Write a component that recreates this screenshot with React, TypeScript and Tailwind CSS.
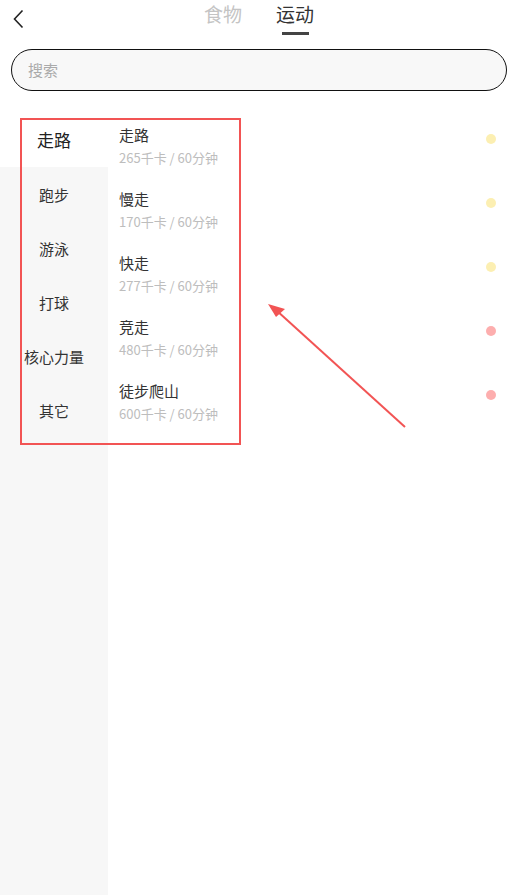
import React from "react";

const cats = ["走路", "跑步", "游泳", "打球", "核心力量", "其它"];
const items = [
  { name: "走路", kcal: 265, c: "bg-[#fcefb2]" },
  { name: "慢走", kcal: 170, c: "bg-[#fcefb2]" },
  { name: "快走", kcal: 277, c: "bg-[#fcefb2]" },
  { name: "竞走", kcal: 480, c: "bg-[#fdaeae]" },
  { name: "徒步爬山", kcal: 600, c: "bg-[#fdaeae]" },
];

export default function App() {
  return (
    <div
      className="relative w-[518px] h-[895px] bg-white overflow-hidden flex flex-col"
      style={{ fontFamily: '"Noto Sans CJK SC", "Noto Sans", sans-serif' }}
    >
      {/* header */}
      <div className="relative h-[49px] shrink-0 flex items-start justify-center">
        <svg className="absolute left-[12px] top-[9px]" width="14" height="20" viewBox="0 0 14 20">
          <path d="M10.5 1.5 L2.5 10 L10.5 18.5" fill="none" stroke="#222" strokeWidth="1.6" />
        </svg>
        <div className="flex gap-[34px] pt-[1px]">
          <div className="flex flex-col items-center">
            <span className="text-[19px] leading-[26px] text-[#c4c4c4]">食物</span>
          </div>
          <div className="flex flex-col items-center">
            <span className="text-[19px] leading-[26px] text-[#333]">运动</span>
            <div className="mt-[5px] w-[27px] h-[3px] bg-[#444]" />
          </div>
        </div>
      </div>

      {/* search */}
      <div className="px-[11px] shrink-0">
        <div className="h-[42px] rounded-full border-[1.5px] border-[#111] bg-[#f8f8f8] flex items-center pl-[16px]">
          <span className="text-[15px] text-[#aaa]">搜索</span>
        </div>
      </div>

      {/* body */}
      <div className="flex flex-1 mt-[22px]">
        <div className="w-[108px] bg-[#f7f7f7] flex flex-col">
          {cats.map((c, i) => (
            <div
              key={c}
              className={`h-[54px] flex items-center justify-center ${
                i === 0 ? "bg-white text-[17px] text-[#222]" : "text-[15px] text-[#333] pt-[2px]"
              }`}
            >
              {c}
            </div>
          ))}
        </div>
        <div className="flex-1 flex flex-col">
          {items.map((it) => (
            <div key={it.name} className="h-[64px] flex justify-between pl-[11px] pr-[22px]">
              <div className="flex flex-col pt-[11px]">
                <span className="text-[15px] leading-[22px] text-[#333]">{it.name}</span>
                <span className="text-[13px] leading-[18px] mt-[3px] text-[#bdbdbd]">
                  {it.kcal}千卡 / 60分钟
                </span>
              </div>
              <div className={`mt-[21px] w-[10px] h-[10px] rounded-full ${it.c}`} />
            </div>
          ))}
        </div>
      </div>

      {/* annotation overlay */}
      <div className="absolute left-[20px] top-[118px] w-[221px] h-[327px] border-2 border-[#f25454] pointer-events-none" />
      <svg className="absolute left-0 top-0 pointer-events-none" width="518" height="895">
        <line x1="405" y1="427" x2="276" y2="310" stroke="#f25454" strokeWidth="2" />
        <polygon points="268,304 285,309 276,317" fill="#f25454" />
      </svg>
    </div>
  );
}
